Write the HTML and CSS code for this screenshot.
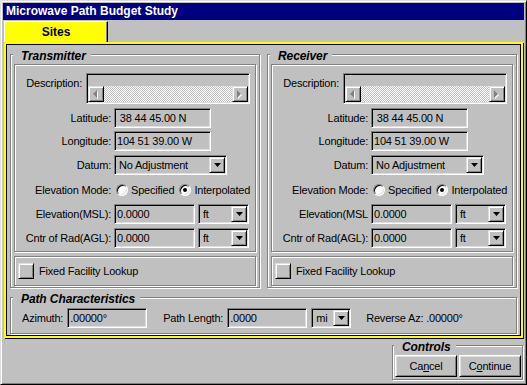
FILE: index.html
```html
<!DOCTYPE html>
<html lang="en">
<head>
  <meta charset="UTF-8">
  <title>Microwave Path Budget Study</title>
  <link rel="stylesheet" href="styles.css">
</head>
<body>
  <div class="window">
    <div class="titlebar">Microwave Path Budget Study</div>
    <div class="tabs"><div class="tab">Sites</div></div>

    <div class="panel">
      <div class="sites">
        <fieldset class="group site">
          <legend>Transmitter</legend>
          <div class="fields">
            <div class="desc-row">
              <span class="desc-label">Description:</span>
              <div class="desc-box">
                <div class="desc-text"></div>
                <div class="hscroll">
                  <span class="sbtn"><svg width="6" height="9" viewBox="0 0 6 9"><polygon points="5,1 1,5 5,9" fill="#fff"/><polygon points="4,0 0,4 4,8" fill="#808080"/></svg></span>
                  <span class="track"></span>
                  <span class="sbtn"><svg width="6" height="9" viewBox="0 0 6 9"><polygon points="1,1 5,5 1,9" fill="#fff"/><polygon points="0,0 4,4 0,8" fill="#808080"/></svg></span>
                </div>
              </div>
            </div>
            <div class="row lat"><span class="lbl">Latitude:</span><div class="field w-coord">&nbsp;38 44 45.00 N</div></div>
            <div class="row lon"><span class="lbl">Longitude:</span><div class="field w-coord">104 51 39.00 W</div></div>
            <div class="row datum"><span class="lbl">Datum:</span>
              <div class="select w-datum"><span class="val">No Adjustment</span><span class="dbtn"><svg width="7" height="4" viewBox="0 0 7 4"><polygon points="0,0 7,0 3.5,4" fill="#000"/></svg></span></div>
            </div>
            <div class="row mode"><span class="lbl">Elevation Mode:</span>
              <span class="radio"></span><span class="opt">Specified</span>
              <span class="radio on"></span><span class="opt">Interpolated</span>
            </div>
            <div class="row elev"><span class="lbl">Elevation(MSL):</span><div class="field w-num">0.0000</div>
              <div class="select w-unit"><span class="val">ft</span><span class="dbtn"><svg width="7" height="4" viewBox="0 0 7 4"><polygon points="0,0 7,0 3.5,4" fill="#000"/></svg></span></div>
            </div>
            <div class="row cntr"><span class="lbl">Cntr of Rad(AGL):</span><div class="field w-num">0.0000</div>
              <div class="select w-unit"><span class="val">ft</span><span class="dbtn"><svg width="7" height="4" viewBox="0 0 7 4"><polygon points="0,0 7,0 3.5,4" fill="#000"/></svg></span></div>
            </div>
          </div>
          <div class="lookup"><span class="check"></span>Fixed Facility Lookup</div>
        </fieldset>

        <fieldset class="group site">
          <legend>Receiver</legend>
          <div class="fields">
            <div class="desc-row">
              <span class="desc-label">Description:</span>
              <div class="desc-box">
                <div class="desc-text"></div>
                <div class="hscroll">
                  <span class="sbtn"><svg width="6" height="9" viewBox="0 0 6 9"><polygon points="5,1 1,5 5,9" fill="#fff"/><polygon points="4,0 0,4 4,8" fill="#808080"/></svg></span>
                  <span class="track"></span>
                  <span class="sbtn"><svg width="6" height="9" viewBox="0 0 6 9"><polygon points="1,1 5,5 1,9" fill="#fff"/><polygon points="0,0 4,4 0,8" fill="#808080"/></svg></span>
                </div>
              </div>
            </div>
            <div class="row lat"><span class="lbl">Latitude:</span><div class="field w-coord">&nbsp;38 44 45.00 N</div></div>
            <div class="row lon"><span class="lbl">Longitude:</span><div class="field w-coord">104 51 39.00 W</div></div>
            <div class="row datum"><span class="lbl">Datum:</span>
              <div class="select w-datum"><span class="val">No Adjustment</span><span class="dbtn"><svg width="7" height="4" viewBox="0 0 7 4"><polygon points="0,0 7,0 3.5,4" fill="#000"/></svg></span></div>
            </div>
            <div class="row mode"><span class="lbl">Elevation Mode:</span>
              <span class="radio"></span><span class="opt">Specified</span>
              <span class="radio on"></span><span class="opt">Interpolated</span>
            </div>
            <div class="row elev"><span class="lbl">Elevation(MSL</span><div class="field w-num">0.0000</div>
              <div class="select w-unit"><span class="val">ft</span><span class="dbtn"><svg width="7" height="4" viewBox="0 0 7 4"><polygon points="0,0 7,0 3.5,4" fill="#000"/></svg></span></div>
            </div>
            <div class="row cntr"><span class="lbl">Cntr of Rad(AGL):</span><div class="field w-num">0.0000</div>
              <div class="select w-unit"><span class="val">ft</span><span class="dbtn"><svg width="7" height="4" viewBox="0 0 7 4"><polygon points="0,0 7,0 3.5,4" fill="#000"/></svg></span></div>
            </div>
          </div>
          <div class="lookup"><span class="check"></span>Fixed Facility Lookup</div>
        </fieldset>
      </div>

      <fieldset class="group path">
        <legend>Path Characteristics</legend>
        <div class="path-row">
          <span>Azimuth:</span><div class="field w-path">.00000°</div>
          <span class="gap-l">Path Length:</span><div class="field w-path">.0000</div>
          <div class="select w-mi"><span class="val">mi</span><span class="dbtn"><svg width="7" height="4" viewBox="0 0 7 4"><polygon points="0,0 7,0 3.5,4" fill="#000"/></svg></span></div>
          <span class="gap-r">Reverse Az: .00000°</span>
        </div>
      </fieldset>
    </div>

    <fieldset class="group controls">
      <legend>Controls</legend>
      <div class="buttons">
        <button class="btn">Ca<u>n</u>cel</button>
        <button class="btn">C<u>o</u>ntinue</button>
      </div>
    </fieldset>
  </div>
</body>
</html>
```

FILE: styles.css
```css
* {
  box-sizing: border-box;
}

body {
  margin: 0;
  background: #c0c0c0;
  color: #000;
  font-family: "Liberation Sans", Arial, sans-serif;
  font-size: 11px;
  letter-spacing: -0.2px;
}

.window {
  width: 527px;
  height: 385px;
  display: flex;
  flex-direction: column;
  padding: 2px;
  border: 1px solid;
  border-color: #dfdfdf #000 #000 #dfdfdf;
  box-shadow: inset 1px 1px #fff, inset -1px -1px #808080;
}

.titlebar {
  height: 17px;
  padding-left: 3px;
  background: #000080;
  color: #fff;
  font-size: 12px;
  font-weight: bold;
  line-height: 17px;
  letter-spacing: 0;
}

.tabs {
  display: flex;
  margin-top: 1px;
  padding-left: 1px;
}

.tab {
  width: 104px;
  height: 21px;
  background: #ff0;
  border-top: 1px solid #fff;
  border-left: 1px solid #fff;
  border-right: 1px solid #000;
  box-shadow: inset -1px 0 #808080;
  font-size: 12px;
  font-weight: bold;
  line-height: 20px;
  text-align: center;
  letter-spacing: 0;
}

.panel {
  margin: 0 1px;
  padding: 1px 4px 2px 4px;
  border: 2px solid #ff0;
  box-shadow: inset 0 0 0 1px #000, 1px 1px #000;
}

.sites {
  display: flex;
  gap: 7px;
}

/* group boxes */
.group {
  margin: 0;
  min-width: 0;
  padding: 0 3px 1px 3px;
  border: 1px solid #808080;
  box-shadow: inset 1px 1px #fff, 1px 1px #fff;
}

.group legend {
  margin-left: -1px;
  padding: 4px 5px 0 8px;
  font-size: 12px;
  font-style: italic;
  font-weight: bold;
  line-height: 14px;
  letter-spacing: -0.1px;
  background: linear-gradient(#c0c0c0, #c0c0c0) 0 4px / 100% 100% no-repeat;
}

.site {
  flex: 1;
}

.fields {
  margin-top: 1px;
  padding: 8px 0 3px 0;
  border: 1px solid #808080;
  box-shadow: inset 1px 1px #fff, 1px 1px #fff;
}

.desc-row {
  display: flex;
  height: 31px;
}

.desc-label {
  width: 67px;
  padding-top: 3px;
  line-height: 14px;
  text-align: right;
}

.desc-box {
  width: 164px;
  margin-left: 4px;
  display: flex;
  flex-direction: column;
  border: 1px solid;
  border-color: #808080 #fff #fff #808080;
  box-shadow: inset 1px 1px #000, inset -1px -1px #dfdfdf;
  padding: 1px;
}

.desc-text {
  flex: 1;
}

.hscroll {
  display: flex;
  height: 16px;
}

.sbtn,
.dbtn,
.check {
  width: 16px;
  height: 16px;
  display: flex;
  align-items: center;
  justify-content: center;
  background: #c0c0c0;
  border: 1px solid;
  border-color: #dfdfdf #000 #000 #dfdfdf;
  box-shadow: inset 1px 1px #fff, inset -1px -1px #808080;
}

.track {
  flex: 1;
  background: conic-gradient(#fff 25%, #c0c0c0 0 50%, #fff 0 75%, #c0c0c0 0) 0 0 / 2px 2px;
}

/* label + control rows */
.row {
  display: flex;
  align-items: center;
  height: 20px;
}

.lat { margin-top: 4px; }
.lon { margin-top: 3px; }
.datum { margin-top: 4px; }
.mode { height: 29px; }
.cntr { margin-top: 4px; }

.lbl {
  width: 96px;
  margin-right: 3px;
  text-align: right;
  white-space: nowrap;
}

.field,
.select {
  height: 20px;
  background: #c0c0c0;
  border: 1px solid;
  border-color: #808080 #fff #fff #808080;
  box-shadow: inset 1px 1px #000, inset -1px -1px #dfdfdf;
  white-space: nowrap;
}

.field {
  padding: 0 2px;
  line-height: 18px;
}

.select {
  display: flex;
  padding: 1px;
}

.select .val {
  flex: 1;
  padding-left: 3px;
  line-height: 16px;
}

.w-coord { width: 97px; }
.w-datum { width: 113px; }
.w-num { width: 81px; }
.w-unit { width: 51px; margin-left: 3px; }
.w-path { width: 80px; margin-left: 4px; }
.w-mi { width: 40px; margin-left: 4px; }

.radio {
  position: relative;
  width: 12px;
  height: 12px;
  margin-left: 2px;
  border-radius: 50%;
  background: #fff;
  border: 1px solid;
  border-color: #808080 #fff #fff #808080;
  box-shadow: inset 1px 1px #000, inset -1px -1px #dfdfdf;
}

.radio.on::after {
  content: "";
  position: absolute;
  left: 3px;
  top: 3px;
  width: 4px;
  height: 4px;
  border-radius: 50%;
  background: #000;
}

.radio + .opt {
  margin-left: 3px;
}

.opt + .radio {
  margin-left: 5px;
}

.lookup {
  height: 30px;
  margin-top: 4px;
  display: flex;
  align-items: center;
  padding-left: 3px;
  border: 1px solid #808080;
  box-shadow: inset 1px 1px #fff, 1px 1px #fff;
}

.check {
  margin-right: 5px;
}

/* path characteristics */
.path {
  margin-top: 0;
  padding: 0 3px 5px 11px;
}

.path legend {
  margin-left: -9px;
}

.path-row {
  display: flex;
  align-items: center;
  margin-top: 2px;
}

.gap-l { margin-left: 16px; }
.gap-r { margin-left: 15px; }

/* controls */
.controls {
  width: 131px;
  margin: -2px 1px 0 auto;
  padding: 0 1px 2px 2px;
}

.buttons {
  display: flex;
  gap: 2px;
  margin-top: 1px;
}

.btn {
  width: 62px;
  height: 22px;
  padding: 0;
  background: #c0c0c0;
  color: #000;
  font-family: inherit;
  font-size: 11px;
  letter-spacing: -0.2px;
  border: 1px solid;
  border-color: #fff #000 #000 #fff;
  box-shadow: inset 1px 1px #dfdfdf, inset -1px -1px #808080;
}
```
